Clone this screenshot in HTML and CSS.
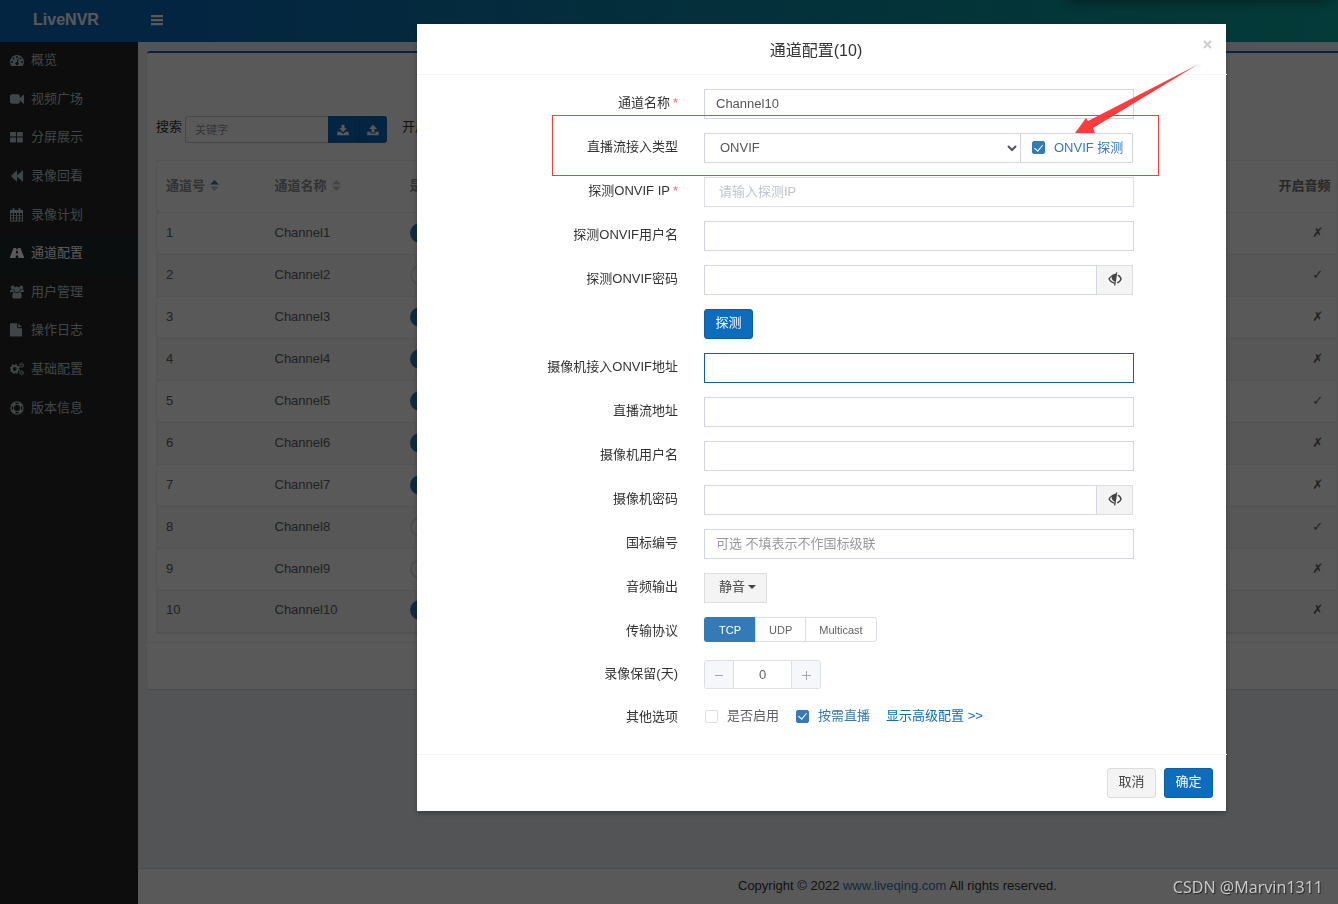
FILE: index.html
```html
<!DOCTYPE html>
<html lang="zh-CN">
<head>
<meta charset="utf-8">
<title>LiveNVR</title>
<link rel="stylesheet" href="styles.css">
</head>
<body>
<div class="app">
  <header class="topbar">
    <a class="brand" href="#">LiveNVR</a>
    <button class="menu-toggle" type="button" aria-label="菜单">
      <svg viewBox="0 0 12 12"><path d="M0 1h12v2.300H0zM0 5h12v2.300H0zM0 9h12v2.300H0z"/></svg>
    </button>
  </header>
  <div class="body">
    <nav class="sidebar">
      <ul class="menu">
        <li><a href="#"><svg viewBox="0 0 14 14"><path fill-rule="evenodd" d="M7 2a7 7 0 0 1 5.900 10.600L12.500 13h-11l-.4-.4A7 7 0 0 1 7 2zM2 8a1 1 0 1 0 0 2 1 1 0 0 0 0-2zm1.500-3.500a1 1 0 1 0 0 2 1 1 0 0 0 0-2zM7 3a1 1 0 1 0 0 2 1 1 0 0 0 0-2zm3.500 1.500a1 1 0 1 0 0 2 1 1 0 0 0 0-2zM12 8a1 1 0 1 0 0 2 1 1 0 0 0 0-2zM7.700 5.500l-.9 3.600a1.600 1.600 0 1 0 1 .2l.9-3.500z"/></svg>概览</a></li>
        <li><a href="#"><svg viewBox="0 0 14 14"><path d="M2 2.300h5.800a2 2 0 0 1 2 2v1.900l3.400-3.400c.3-.3.800-.1.800.4v8c0 .5-.5.700-.8.400L9.800 8.200v1.600a2 2 0 0 1-2 2H2a2 2 0 0 1-2-2V4.300a2 2 0 0 1 2-2z"/></svg>视频广场</a></li>
        <li><a href="#"><svg viewBox="0 0 14 14"><path d="M.5 2H5.500l.5.500v4H.5L0 6V2.500zM7.500 2H12l.8.500v4H7V2.500zM.5 7.500H6v4.500l-.5.500H.5L0 12V8zM7 7.500h5.800V12l-.5.500H7.500L7 12z"/></svg>分屏展示</a></li>
        <li><a href="#"><svg viewBox="0 0 14 14"><path d="M7 1.500v5l5.500-5h.5v11h-.5L7 7.500v5h-.5L1 7l5.500-5.500z"/></svg>录像回看</a></li>
        <li><a href="#"><svg viewBox="0 0 14 14"><path fill-rule="evenodd" d="M0 2h2.500V.3h2V2h4V.3h2V2H13v11.500H0zM1 5v2h2V5zm3 0v2h2V5zm3 0v2h2V5zm3 0v2h2V5zM1 7.800v2h2v-2zm3 0v2h2v-2zm3 0v2h2v-2zm3 0v2h2v-2zM1 10.600v2h2v-2zm3 0v2h2v-2zm3 0v2h2v-2zm3 0v2h2v-2z"/></svg>录像计划</a></li>
        <li class="active"><a href="#"><svg viewBox="0 0 14 14"><path fill-rule="evenodd" d="M3.500 2h2.800l-.1 1.500h1.600L7.700 2h2.800l3.500 9c.2.600 0 1-.5 1H8.400l-.2-2.500H5.800L5.600 12H.5c-.5 0-.7-.4-.5-1zM6.200 4.700 6 7.500h2l-.2-2.800z"/></svg>通道配置</a></li>
        <li><a href="#"><svg viewBox="0 0 14 14"><circle cx="2.700" cy="2.500" r="1.900"/><circle cx="11.300" cy="2.500" r="1.900"/><circle cx="7" cy="4.400" r="2.800"/><path d="M0 7c0-1.500.5-2.600 1-2.600.7.500 1.800.6 2.500.2 0 1 .3 1.800.8 2.400H1C.4 7.200 0 7.400 0 7zM14 7c0-1.500-.5-2.600-1-2.600-.7.500-1.800.6-2.500.2 0 1-.3 1.800-.8 2.400H13c.6 0 1 .2 1-.2zM4 7.100c1.800 1.400 4.200 1.400 6 0 1.200.2 1.700 2 1.700 4.400 0 1.300-.8 2-1.800 2H4.100c-1 0-1.800-.7-1.800-2C2.300 9.100 2.800 7.300 4 7.100z"/></svg>用户管理</a></li>
        <li><a href="#"><svg viewBox="0 0 14 14"><path d="M.5.300h6.700v5h4.800v8.200H.5L0 13V.8zM8.200.3 12 4.300H8.200z"/></svg>操作日志</a></li>
        <li><a href="#"><svg viewBox="0 0 14 14"><circle class="ring" cx="4.700" cy="7" r="2.900"/><circle class="teeth" cx="4.700" cy="7" r="4.300"/><circle class="ring small" cx="11.500" cy="3.300" r="1.500"/><circle class="teeth small" cx="11.500" cy="3.300" r="2.200"/><circle class="ring small" cx="11.500" cy="10.700" r="1.500"/><circle class="teeth small" cx="11.500" cy="10.700" r="2.200"/></svg>基础配置</a></li>
        <li><a href="#"><svg viewBox="0 0 14 14"><path fill-rule="evenodd" d="M7 .3a6.700 6.700 0 1 1 0 13.400A6.700 6.700 0 0 1 7 .3zM7 4a3 3 0 1 0 0 6 3 3 0 0 0 0-6zM4.800 2 6 3.200h2L9.200 2a5.500 5.500 0 0 0-4.400 0zM2 4.800a5.500 5.500 0 0 0 0 4.400L3.200 8V6zm10 0L10.800 6v2L12 9.200a5.500 5.500 0 0 0 0-4.400zM4.800 12a5.500 5.500 0 0 0 4.400 0L8 10.800H6z"/></svg>版本信息</a></li>
      </ul>
    </nav>
    <main class="content">
      <section class="panel">
        <div class="toolbar">
          <label for="keyword">搜索</label>
          <input id="keyword" class="keyword" type="text" placeholder="关键字">
          <button class="tool first" type="button" aria-label="下载"><svg viewBox="0 0 12 12"><path d="M4.500.8h3v3.400H10L6 8.300 2 4.200h2.500zM.3 7.800h3L6 10l2.700-2.200h3v3.400H.3z"/></svg></button>
          <button class="tool last" type="button" aria-label="上传"><svg viewBox="0 0 12 12"><path d="M4.500 8.500h3V5H10L6 .8 2 5h2.500zM.3 7.800h3.200v1.700h5V7.800h3.200v3.400H.3z"/></svg></button>
          <span class="filter">开启状态</span>
        </div>
        <table class="channels">
          <colgroup><col class="c-id"><col class="c-name"><col><col class="c-audio"></colgroup>
          <thead>
            <tr>
              <th>通道号<svg class="sort asc" viewBox="0 0 9 11"><path class="up" d="M0 4.500 4.500 0 9 4.500z"/><path d="M0 6.500h9L4.500 11z"/></svg></th>
              <th>通道名称<svg class="sort" viewBox="0 0 9 11"><path d="M0 4.500 4.500 0 9 4.500zM0 6.500h9L4.500 11z"/></svg></th>
              <th>是否启用</th>
              <th class="mid">开启音频<svg class="sort" viewBox="0 0 9 11"><path d="M0 4.500 4.500 0 9 4.500zM0 6.500h9L4.500 11z"/></svg></th>
            </tr>
          </thead>
          <tbody>
            <tr><td>1</td><td>Channel1</td><td><span class="switch on"></span></td><td class="mid">✗</td></tr>
            <tr><td>2</td><td>Channel2</td><td><span class="switch"></span></td><td class="mid">✓</td></tr>
            <tr><td>3</td><td>Channel3</td><td><span class="switch on"></span></td><td class="mid">✗</td></tr>
            <tr><td>4</td><td>Channel4</td><td><span class="switch on"></span></td><td class="mid">✗</td></tr>
            <tr><td>5</td><td>Channel5</td><td><span class="switch on"></span></td><td class="mid">✓</td></tr>
            <tr><td>6</td><td>Channel6</td><td><span class="switch on"></span></td><td class="mid">✗</td></tr>
            <tr><td>7</td><td>Channel7</td><td><span class="switch on"></span></td><td class="mid">✗</td></tr>
            <tr><td>8</td><td>Channel8</td><td><span class="switch"></span></td><td class="mid">✓</td></tr>
            <tr><td>9</td><td>Channel9</td><td><span class="switch"></span></td><td class="mid">✗</td></tr>
            <tr><td>10</td><td>Channel10</td><td><span class="switch on"></span></td><td class="mid">✗</td></tr>
          </tbody>
        </table>
        <div class="panel-foot"></div>
      </section>
      <footer class="copyright">Copyright © 2022 <a href="#">www.liveqing.com</a> All rights reserved.</footer>
    </main>
  </div>
</div>

<div class="backdrop">
  <form class="modal" role="dialog" aria-labelledby="dlg-title">
    <div class="modal-head">
      <h1 id="dlg-title">通道配置(10)</h1>
      <button class="close" type="button" aria-label="关闭"><svg viewBox="0 0 9 9"><path d="M1 1l7 7M8 1 1 8"/></svg></button>
    </div>
    <div class="modal-body">
      <div class="row"><label for="name">通道名称<span class="req">*</span></label><input id="name" class="field" type="text" value="Channel10"></div>
      <div class="row"><label for="type">直播流接入类型</label>
        <div class="group">
          <select id="type" class="field select"><option>ONVIF</option></select>
          <label class="check on addon"><input type="checkbox" checked>ONVIF 探测</label>
        </div>
      </div>
      <div class="row"><label for="ip">探测ONVIF IP<span class="req">*</span></label><input id="ip" class="field pale" type="text" placeholder="请输入探测IP"></div>
      <div class="row"><label for="user">探测ONVIF用户名</label><input id="user" class="field" type="text"></div>
      <div class="row"><label for="pwd">探测ONVIF密码</label>
        <div class="group"><input id="pwd" class="field" type="password"><button class="eye" type="button" aria-label="显示密码"><svg viewBox="0 0 14 14"><path fill-rule="evenodd" d="M9.300.3 7.300 13.500H6l.3-1.800C3.500 11.200 1.300 9.200.3 7c1.200-2.300 4-4.800 7.700-5.500L8.300.3zM3.600 4.500C2.800 5.200 2.200 6.100 1.800 7c.8 1.500 2.400 2.900 4.700 3.400l.2-1C4.500 8.700 3.300 6.800 3.600 4.500z"/><path d="M10 2.500c2 .9 3.300 2.600 3.800 4.500-.6 2.200-2.300 3.900-4.800 4.600l.2-1.500C10.800 9.500 11.800 8.300 12.200 7c-.4-1.200-1.200-2.200-2.500-2.900z"/></svg></button></div>
      </div>
      <div class="row"><span></span><button class="btn primary" type="button">探测</button></div>
      <div class="row"><label for="onvif">摄像机接入ONVIF地址</label><input id="onvif" class="field current" type="text"></div>
      <div class="row"><label for="url">直播流地址</label><input id="url" class="field" type="text"></div>
      <div class="row"><label for="camuser">摄像机用户名</label><input id="camuser" class="field" type="text"></div>
      <div class="row"><label for="campwd">摄像机密码</label>
        <div class="group"><input id="campwd" class="field" type="password"><button class="eye" type="button" aria-label="显示密码"><svg viewBox="0 0 14 14"><path fill-rule="evenodd" d="M9.300.3 7.300 13.500H6l.3-1.800C3.500 11.200 1.300 9.200.3 7c1.200-2.300 4-4.800 7.700-5.500L8.300.3zM3.600 4.500C2.800 5.200 2.200 6.100 1.800 7c.8 1.500 2.400 2.900 4.700 3.400l.2-1C4.500 8.700 3.300 6.800 3.600 4.500z"/><path d="M10 2.500c2 .9 3.300 2.600 3.800 4.500-.6 2.200-2.300 3.900-4.800 4.600l.2-1.500C10.800 9.500 11.800 8.300 12.200 7c-.4-1.200-1.200-2.200-2.500-2.900z"/></svg></button></div>
      </div>
      <div class="row"><label for="gb">国标编号</label><input id="gb" class="field" type="text" placeholder="可选 不填表示不作国标级联"></div>
      <div class="row"><label for="audio">音频输出</label><button id="audio" class="drop" type="button">静音<span class="caret"></span></button></div>
      <div class="row short"><span class="caption" id="proto">传输协议</span>
        <div class="segments" role="radiogroup" aria-labelledby="proto">
          <label><input type="radio" name="proto" checked>TCP</label><label><input type="radio" name="proto">UDP</label><label><input type="radio" name="proto">Multicast</label>
        </div>
      </div>
      <div class="row short"><label for="days">录像保留(天)</label>
        <div class="stepper"><button type="button" aria-label="减少"><svg viewBox="0 0 10 10"><path d="M1 5.500h8"/></svg></button><input id="days" type="text" value="0"><button type="button" aria-label="增加"><svg class="plus" viewBox="0 0 10 10"><path d="M1 5.500h9M5.500 1v9"/></svg></button></div>
      </div>
      <div class="row"><span class="caption">其他选项</span>
        <div class="options">
          <label class="check"><input type="checkbox">是否启用</label>
          <label class="check on"><input type="checkbox" checked>按需直播</label>
          <a href="#">显示高级配置 &gt;&gt;</a>
        </div>
      </div>
    </div>
    <div class="modal-foot">
      <button class="btn plain" type="button">取消</button>
      <button class="btn primary" type="button">确定</button>
    </div>
    <div class="callout"></div>
    <svg class="arrow" viewBox="0 0 123 70"><path d="M0 68 11 53l2 3L122 0 18 63l2 5z"/></svg>
  </form>
</div>
<div class="watermark">CSDN @Marvin1311</div>
</body>
</html>
```
FILE: styles.css
```css
* { box-sizing: border-box; }
body {
  margin: 0;
  overflow: hidden;
  font: 13px/20px "Liberation Sans", "Noto Sans CJK SC", sans-serif;
  color: #333;
}
button, input, select { font: inherit; color: inherit; margin: 0; }
button { cursor: pointer; padding: 0; }
a { text-decoration: none; }
svg { display: block; fill: currentColor; }

.app { display: flex; flex-direction: column; height: 100vh; }
.topbar {
  position: relative;
  display: flex;
  align-items: center;
  height: 42px;
  flex: none;
  background: linear-gradient(90deg, #0d6cb9 15%, #0b9f9d 85%, #0ca8a4);
  color: #fff;
}
.topbar::after {
  content: "";
  position: absolute;
  top: -20px;
  right: 10px;
  width: 260px;
  height: 20px;
  box-shadow: 0 2px 12px rgba(0, 0, 0, .4);
}
.brand {
  width: 138px;
  padding: 0 6px 3px 0;
  text-align: center;
  font-size: 16px;
  font-weight: bold;
  color: #fff;
}
.menu-toggle { width: 38px; height: 38px; padding: 0 13px 2px; border: 0; background: none; color: #fff; }
.menu-toggle svg { width: 12px; height: 12px; }

.body { display: flex; flex: 1; min-height: 0; }
.sidebar { width: 138px; flex: none; background: #252525; }
.menu { display: grid; grid-auto-rows: 1fr; height: 386px; margin: 0; padding: 0; list-style: none; }
.menu a { display: flex; align-items: center; gap: 7px; height: 100%; padding: 0 10px 2px; color: #b8c7ce; }
.menu svg { width: 14px; height: 14px; }
.menu .active { background: #1e282c; }
.menu .active a { color: #fff; }
.ring { fill: none; stroke: currentColor; stroke-width: 2; }
.teeth { fill: none; stroke: currentColor; stroke-width: 1.500; stroke-dasharray: 1.700 1.677; }
.ring.small { stroke-width: 1; }
.teeth.small { stroke-width: 1; stroke-dasharray: 1 1.300; }

.content { display: flex; flex-direction: column; flex: 1; min-width: 0; padding-top: 9px; background: #ecf0f5; }
.panel {
  margin-left: 9px;
  background: #fff;
  border-top: 2px solid #0d6cb9;
  border-radius: 3px 0 0 3px;
  box-shadow: 0 1px 1px rgba(0, 0, 0, .1);
}
.toolbar { display: flex; align-items: flex-start; height: 107px; padding: 63px 0 0 9px; line-height: 22px; }
.keyword {
  width: 143px;
  height: 27px;
  margin-left: 3px;
  padding: 0 9px;
  border: 1px solid #ccc;
  border-right: 0;
  border-radius: 3px 0 0 3px;
  font-size: 11px;
  background: #fff;
}
.keyword::placeholder { color: #999; }
.tool { display: flex; align-items: center; justify-content: center; width: 30px; height: 27px; border: 0; background: #0d6cb9; color: #fff; }
.tool.last { width: 29px; border-left: 1px solid #0b60a5; border-radius: 0 3px 3px 0; }
.tool svg { width: 12px; height: 12px; }
.filter { margin-left: 15px; }
.channels {
  width: calc(100% - 9px);
  margin-left: 9px;
  table-layout: fixed;
  border-collapse: collapse;
  border: 1px solid #eee;
  border-bottom: 2px solid #e4e7ed;
}
.c-id { width: 109px; }
.c-name { width: 135px; }
.c-audio { width: 70px; }
.channels tr { height: 42px; border-bottom: 1px solid #eee; }
.channels thead tr { height: 52px; }
.channels th, .channels td { padding: 0 0 2px 9px; text-align: left; white-space: nowrap; }
.channels th { color: #909399; }
.channels tbody tr:nth-child(even) { background: #f9f9f9; }
.channels td { color: #606266; }
.channels th.mid { padding-left: 11px; color: #777; overflow: hidden; }
.channels td.mid { padding-left: 31px; text-align: center; font-family: "DejaVu Sans", sans-serif; }
.sort { display: inline-block; width: 9px; height: 11px; margin-left: 5px; color: #c0c4cc; vertical-align: -1px; }
.sort .up { fill: #337ab7; }
.switch { display: block; width: 40px; height: 20px; border-radius: 10px; border: 2px solid #dcdfe6; background: #fff; }
.switch.on { border-color: #337ab7; background: #337ab7; }
.panel-foot { height: 47px; margin-top: 8px; border-top: 1px solid #eee; }
.copyright { margin-top: auto; height: 36px; padding: 7px 0 0 50%; border-top: 1px solid #d2d6de; background: #fff; white-space: nowrap; }
.copyright a { color: #337ab7; }

.backdrop {
  position: fixed;
  inset: 0;
  display: flex;
  align-items: flex-start;
  padding: 24px 112px 24px 417px;
  background: rgba(0, 0, 0, .65);
}
.modal { position: relative; flex: 1; min-width: 0; background: #fff; box-shadow: 0 2px 5px rgba(0, 0, 0, .3); }
.modal-head { position: relative; height: 51px; padding: 16px 12px 0 0; border-bottom: 1px solid #f4f4f4; margin-right: -1px; text-align: center; }
.modal-head h1 { margin: 0; font-size: 16px; font-weight: normal; line-height: 22px; }
.close { position: absolute; top: 16px; right: 15px; width: 9px; height: 9px; border: 0; background: none; color: #ccc; }
.close svg { fill: none; stroke: currentColor; stroke-width: 2; }

.modal-body { display: flex; flex-direction: column; gap: 14px; padding: 14px 92px 21px 0; }
.row { display: grid; grid-template-columns: 261px 1fr; column-gap: 26px; justify-items: start; align-items: start; min-height: 30px; }
.row.short { min-height: 29px; }
.row > label, .caption { justify-self: end; line-height: 28px; white-space: nowrap; }
.req { margin-left: 3px; color: #f56c6c; }
.field { width: 100%; height: 30px; padding: 0 11px 2px; border: 1px solid #d2d6de; border-radius: 0; background: #fff; color: #555; outline: 0; }
.field::placeholder { color: #999; }
.pale { padding: 0 14px 2px; border-color: #dcdfe6; }
.pale::placeholder { color: #c0c4cc; }
.current { border-color: #0d5fa3; }
.group { display: flex; width: 100%; }
.group .field { flex: 1; min-width: 0; }
.check { display: flex; align-items: center; color: #606266; white-space: nowrap; }
.check.on { color: #337ab7; }
.check input { appearance: none; display: grid; place-items: center; width: 13px; height: 13px; margin-right: 9px; border: 1px solid #dcdfe6; border-radius: 2px; background: #fff; }
.check input:checked { border-color: #337ab7; background: #337ab7; }
.check input:checked::after { content: ""; width: 4px; height: 7px; border: solid #fff; border-width: 0 1px 1px 0; transform: translateY(-1px) rotate(40deg); }
.addon { width: 112px; height: 30px; margin-right: 1px; padding: 0 0 1px 11px; border: 1px solid #d2d6de; border-left: 0; }
.eye { display: flex; align-items: center; justify-content: center; width: 36px; height: 30px; margin-right: 1px; padding-bottom: 3px; border: 1px solid #ddd; border-left: 0; background: #f4f4f4; color: #444; }
.eye svg { width: 14px; height: 14px; }
.btn { width: 49px; height: 30px; padding-bottom: 2px; border: 1px solid #0b60a5; border-radius: 3px; }
.primary { background: #0d6cbc; color: #fff; }
.plain { background: #f4f4f4; border-color: #ddd; color: #444; }
.drop { display: flex; align-items: center; justify-content: center; gap: 3px; width: 63px; height: 30px; padding: 0 0 2px 4px; border: 1px solid #ddd; background: #f4f4f4; color: #444; }
.caret { border: 4px solid transparent; border-top-color: currentColor; border-bottom: 0; }
.segments { display: flex; height: 25px; border: 1px solid #dcdfe6; border-radius: 3px; font-size: 11px; line-height: 24px; color: #606266; }
.segments label { padding: 0 13px; border-left: 1px solid #dcdfe6; }
.segments label:first-child { margin: -1px 0 -1px -1px; padding: 1px 14px 0 15px; border: 0; border-radius: 3px 0 0 3px; }
.segments label:has(:checked) { background: #337ab7; color: #fff; }
.segments input { position: absolute; opacity: 0; }
.stepper { display: flex; width: 117px; height: 29px; border: 1px solid #dcdfe6; border-radius: 3px; overflow: hidden; }
.stepper input { flex: 1; min-width: 0; padding: 0; border: solid #dcdfe6; border-width: 0 1px; text-align: center; color: #606266; outline: 0; }
.stepper button { display: flex; align-items: center; justify-content: center; width: 28px; border: 0; background: #f5f7fa; color: #a0a4ac; }
.stepper svg { width: 10px; height: 10px; stroke: currentColor; }
.options { display: flex; align-items: center; height: 26px; }
.options .check { margin: 0 16px 0 1px; }
.options a { color: #0d6cbc; }
.modal-foot { display: flex; justify-content: flex-end; gap: 8px; margin-right: -1px; padding: 13px 14px; border-top: 1px solid #f4f4f4; }

.callout { position: absolute; left: 135px; top: 91px; right: 67px; height: 61px; border: 1px solid #f53f3f; pointer-events: none; }
.arrow { position: absolute; right: 28px; top: 41px; width: 123px; height: 70px; fill: #ff3b3b; pointer-events: none; }
.watermark { position: fixed; right: 15px; bottom: 7px; font: 16px/20px "Noto Sans", sans-serif; color: #c8c8c8; text-shadow: 1px 1px 1px #222; }
```
